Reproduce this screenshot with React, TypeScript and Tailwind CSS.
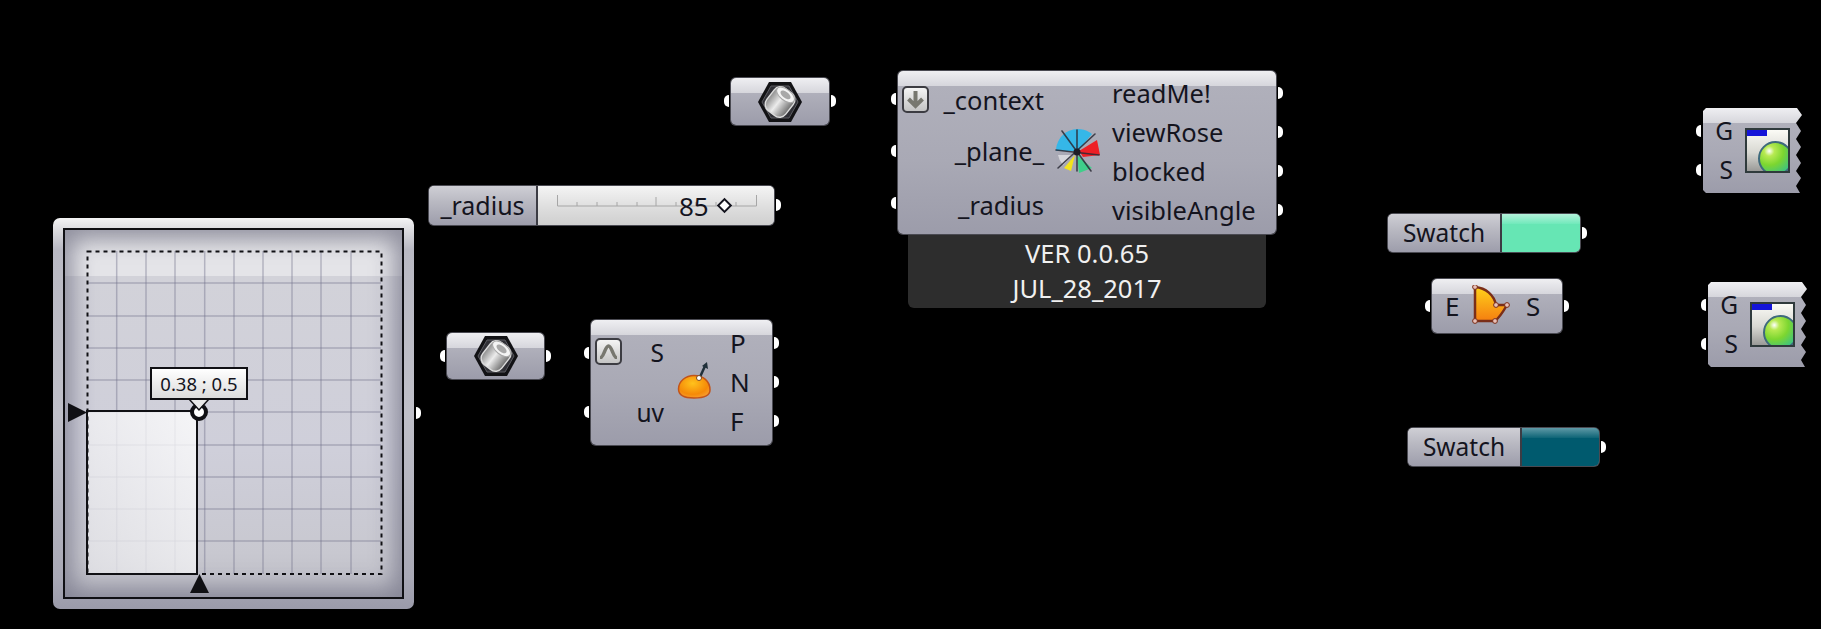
import type { ReactNode } from "react";

const NODE = "absolute rounded-[5px] ring-1 ring-[#4a4a52] text-[#14141e] bg-[linear-gradient(#efeff2_0,#d6d6dc_15px,#b0b0bb_15px,#a9a9b5_55%,#9c9caa_100%)]";
const GREY_CELL = "bg-[linear-gradient(#cfcfd5_0,#b9b9c2_40%,#9d9dab_100%)]";

// column of port nubs hanging off a node edge
function Pins({ side, count, className }: { side: "left" | "right"; count: number; className: string }) {
  const rail = side === "left" ? "-left-[7px]" : "-right-[7px]";
  const shape = side === "left" ? "rounded-l-full" : "rounded-r-full";
  return (
    <div className={`absolute flex flex-col ${rail} ${className}`}>
      {Array.from({ length: count }, (_, i) => (
        <span key={i} className={`h-[12px] w-[5px] bg-white ${shape}`} />
      ))}
    </div>
  );
}

function Label({ children, className = "" }: { children: ReactNode; className?: string }) {
  return <span className={`block h-[34px] leading-[34px] whitespace-nowrap ${className}`}>{children}</span>;
}

function HexIcon({ id }: { id: string }) {
  return (
    <svg width="46" height="42" viewBox="0 0 46 42">
      <defs>
        <linearGradient id={id} x1="0" y1="0" x2="1" y2="0">
          <stop offset="0" stopColor="#8c8c8c" />
          <stop offset="0.45" stopColor="#ececec" />
          <stop offset="1" stopColor="#6e6e6e" />
        </linearGradient>
      </defs>
      <polygon points="1,21 12,1 34,1 45,21 34,41 12,41" fill="#121215" />
      <polygon points="5,21 14,5 32,5 41,21 32,37 14,37" fill="#303036" stroke="#5c5c62" strokeWidth="1" />
      <g transform="rotate(38 23 21)">
        <rect x="11" y="7" width="24" height="28" rx="8" fill={`url(#${id})`} stroke="#dcdcdc" strokeWidth="1.5" />
        <ellipse cx="23" cy="12" rx="10.5" ry="5.5" fill="#f4f4f4" stroke="#a8a8a8" />
        <ellipse cx="23" cy="12" rx="6" ry="3" fill="#a8a8a8" />
      </g>
    </svg>
  );
}

function ParamHex({ className, id }: { className: string; id: string }) {
  return (
    <div className={`${NODE} flex items-center justify-center ${className}`}>
      <Pins side="left" count={1} className="top-[17px]" />
      <HexIcon id={id} />
      <Pins side="right" count={1} className="top-[17px]" />
    </div>
  );
}

function SquareButton({ children, className }: { children: ReactNode; className: string }) {
  return (
    <span className={`absolute left-[4px] flex h-[27px] w-[27px] items-center justify-center rounded-[5px] border-2 border-[#3c3c42] bg-[linear-gradient(#f4f4f4,#c4c4c4)] ${className}`}>
      {children}
    </span>
  );
}

function SurfaceIcon() {
  return (
    <svg width="36" height="38" viewBox="0 0 36 38">
      <defs>
        <radialGradient id="dome" cx="0.45" cy="0.35" r="0.75">
          <stop offset="0" stopColor="#ffc21c" />
          <stop offset="0.65" stopColor="#f58a08" />
          <stop offset="1" stopColor="#f9a53a" />
        </radialGradient>
      </defs>
      <path d="M1.5 28 C1.5 20 9 14.5 17 14.5 C26 14.5 33 20 33 29 C33 35 25 37 17 37 C9 37 1.5 35 1.5 28 Z" fill="url(#dome)" stroke="#c2541a" strokeWidth="1.5" />
      <path d="M23 16 L28 5" stroke="#20303a" strokeWidth="2.5" />
      <path d="M30 1 L25 5 L31 8 Z" fill="#20303a" />
      <circle cx="22" cy="17" r="2.5" fill="#fff" stroke="#7a4a20" />
    </svg>
  );
}

function RoseIcon() {
  return (
    <svg width="48" height="48" viewBox="0 0 48 48">
      <path d="M25 24 L3 24 A22 22 0 0 1 39 7 Z" fill="#35b7e8" />
      <path d="M26 24 L44 13 L47 28 L30 30 Z" fill="#ee1f25" />
      <path d="M24 28 L26 46 L39 41 Z" fill="#3fcf8a" />
      <path d="M22 28 L11 41 L18 44 Z" fill="#f3e31b" />
      <path d="M20 28 L5 28 A20 20 0 0 0 10 38 Z" fill="#d6d6dc" />
      <g stroke="#2a2a35" strokeOpacity="0.85" strokeWidth="1.6" strokeLinecap="round">
        <path d="M9 4 L38 44" />
        <path d="M42 7 L5 41" />
        <path d="M24 3 L24 44" />
        <path d="M3 23 L46 28" />
      </g>
      <circle cx="24" cy="25" r="3.5" fill="#1d1d26" />
    </svg>
  );
}

function ShapeIcon() {
  return (
    <svg width="40" height="42" viewBox="0 0 40 42">
      <defs>
        <linearGradient id="shape" x1="0" y1="0" x2="0" y2="1">
          <stop offset="0" stopColor="#ffd21a" />
          <stop offset="1" stopColor="#f57e10" />
        </linearGradient>
      </defs>
      <path d="M4 2 C15 3 23 10 25 20 L36 20 C32 27 29 32 24 36 L4 36 Z" fill="url(#shape)" stroke="#7a2e18" strokeWidth="2.5" />
      {[[4, 2], [25, 20], [36, 20], [24, 36], [4, 36]].map(([cx, cy]) => (
        <circle key={`${cx}-${cy}`} cx={cx} cy={cy} r="2.4" fill="#e8c0b8" stroke="#7a2e18" />
      ))}
    </svg>
  );
}

function Swatch({ className, colour, gloss }: { className: string; colour: string; gloss: string }) {
  return (
    <div className={`${NODE} flex ${className}`}>
      <div className={`flex w-[114px] items-center justify-center rounded-l-[5px] border-r-2 border-[#3c3c44] text-[24.5px] ${GREY_CELL}`}>Swatch</div>
      <div className={`flex-1 rounded-r-[5px] ${colour}`}>
        <div className={`h-[10px] rounded-tr-[5px] ${gloss}`} />
      </div>
      <Pins side="right" count={1} className="top-[13px]" />
    </div>
  );
}

function PreviewIcon() {
  return (
    <div className="relative h-[45px] w-[45px] overflow-hidden border-2 border-[#2f3a3c] bg-[linear-gradient(#fbfbf6,#d8d8d2_55%,#9a9a98)]">
      <div className="h-[6px] w-[20px] bg-[#1414d8]" />
      <div className="absolute -right-[5px] -bottom-[5px] h-[35px] w-[35px] rounded-full border-2 border-[#3e6a7c] bg-[radial-gradient(circle_at_30%_26%,#ffffff_0,#b7ea52_16%,#7cd630_45%,#34c08c_85%,#1fa89a_100%)]" />
    </div>
  );
}

function Preview({ className }: { className: string }) {
  return (
    <div className={`absolute h-[85px] w-[99px] text-[#14141e] ${className}`}>
      <Pins side="left" count={2} className="top-[17px] gap-[27px]" />
      <div className="flex h-full items-center bg-[linear-gradient(#efeff2_0,#d6d6dc_15px,#b0b0bb_15px,#a9a9b5_55%,#9c9caa_100%)] [clip-path:polygon(3px_0,94px_0,99px_7px,93px_15px,98px_23px,93px_31px,98px_39px,93px_47px,98px_55px,93px_63px,98px_70px,93px_78px,97px_85px,3px_85px,0_82px,0_3px)]">
        <div className="flex w-[30px] flex-col items-end gap-[5px] text-[24.5px] leading-[34px]">
          <span>G</span>
          <span>S</span>
        </div>
        <div className="ml-[12px]">
          <PreviewIcon />
        </div>
      </div>
    </div>
  );
}

function MdSlider() {
  const xs = [116.7, 146, 175, 204.7, 234, 263, 292, 321, 351];
  const ys = [284, 317, 349, 381, 413, 446, 478, 510, 542];
  return (
    <div className="absolute top-[218px] left-[53px] h-[391px] w-[361px] rounded-[7px] bg-[linear-gradient(#f4f4f5,#dcdce0_3%,#b9b9c3_8%,#c0c0c9_50%,#a9a9b6_92%,#9a9aa9)] p-[10px]">
      <Pins side="right" count={1} className="top-[189px]" />
      <div className="relative h-full w-full border-2 border-[#101014] bg-[linear-gradient(#d8d8dc_0,#e4e4e8_26px,#e4e4e8_46px,#d2d2d9_46px,#cfcfda_60%,#c8c8d0_88%,#bcbcc5_100%)] shadow-[inset_0_0_22px_8px_rgba(105,105,125,0.65)]">
        <svg className="absolute -top-[2px] -left-[2px]" width="340" height="370" viewBox="63 229 340 370">
          <defs>
            <linearGradient id="sel" x1="1" y1="0" x2="0" y2="1">
              <stop offset="0" stopColor="#ffffff" />
              <stop offset="1" stopColor="#e4e4e8" />
            </linearGradient>
          </defs>
          <g stroke="#70708a" strokeOpacity="0.42" strokeWidth="1.5">
            {xs.map((x) => <line key={x} x1={x} x2={x} y1="252" y2="575" />)}
            {ys.map((y) => <line key={y} x1="87" x2="381" y1={y} y2={y} />)}
          </g>
          <rect x="87" y="412" width="110" height="163" fill="url(#sel)" fillOpacity="0.78" />
          <rect x="87.5" y="252.5" width="294" height="322.5" fill="none" stroke="#101014" strokeWidth="2" strokeDasharray="4 4" />
          <rect x="87" y="412" width="110" height="163" fill="none" stroke="#101014" strokeWidth="2" />
          <polygon points="68,404 87,413.5 68,423" fill="#101014" />
          <polygon points="199.5,575 209,594 190,594" fill="#101014" />
          <circle cx="199" cy="413" r="7" fill="#fff" stroke="#101014" strokeWidth="4" />
          <polygon points="189,399 209,399 199,411" fill="#e8e8e8" />
          <path d="M189 400 L199 411 L209 400" fill="none" stroke="#101014" strokeWidth="1.5" />
        </svg>
        <div className="absolute top-[137px] left-[85px] flex h-[33px] w-[98px] items-center justify-center border-2 border-[#101014] bg-[linear-gradient(#ffffff,#dcdcdc)] text-[18.5px] text-[#14141e]">
          0.38 ; 0.5
        </div>
      </div>
    </div>
  );
}

export default function App() {
  return (
    <div className="relative h-[629px] w-[1821px] overflow-hidden bg-black font-['Noto_Sans',sans-serif]">
      <MdSlider />

      {/* _radius slider */}
      <div className={`${NODE} top-[186px] left-[429px] flex h-[39px] w-[345px]`}>
        <div className={`flex w-[109px] items-center justify-center rounded-l-[5px] border-r-2 border-[#3c3c44] text-[25px] ${GREY_CELL}`}>_radius</div>
        <div className="relative flex flex-1 items-center rounded-r-[5px] bg-[linear-gradient(#f4f4f4,#dedede_55%,#cfcfcf)]">
          <svg className="absolute top-[9px] left-[19px]" width="200" height="12" viewBox="0 0 200 12">
            <path d="M0.5 0 V11 H199.5 V0 M20 7 V11 M40 7 V11 M60 7 V11 M80 7 V11 M99 2 V11 M119 7 V11 M139 7 V11 M159 7 V11 M179 7 V11" fill="none" stroke="#a6a6a6" />
          </svg>
          <span className="relative ml-[141px] text-[26px] leading-none">85</span>
          <span className="relative ml-[10px] h-[11px] w-[11px] rotate-45 border-[2.5px] border-[#14141e] bg-white" />
        </div>
        <Pins side="right" count={1} className="top-[13px]" />
      </div>

      <ParamHex id="hexA" className="top-[78px] left-[731px] h-[47px] w-[98px]" />
      <ParamHex id="hexB" className="top-[333px] left-[447px] h-[46px] w-[97px]" />

      {/* surface evaluation */}
      <div className={`${NODE} top-[320px] left-[591px] flex h-[125px] w-[181px] text-[24.5px]`}>
        <Pins side="left" count={2} className="top-[27px] gap-[47px]" />
        <SquareButton className="top-[18px]">
          <svg width="19" height="15" viewBox="0 0 19 15">
            <path d="M1 14 C5 14 6 2 9.5 2 C13 2 14 14 18 14" fill="none" stroke="#77776f" strokeWidth="3.5" />
          </svg>
        </SquareButton>
        <div className="flex w-[73px] flex-col items-end gap-[26px] pt-[16px]">
          <Label>S</Label>
          <Label>uv</Label>
        </div>
        <div className="mt-[41px] ml-[13px]">
          <SurfaceIcon />
        </div>
        <div className="ml-[17px] flex flex-col gap-[5px] pt-[6px] text-[26px]">
          <Label>P</Label>
          <Label>N</Label>
          <Label>F</Label>
        </div>
        <Pins side="right" count={3} className="top-[17px] gap-[27px]" />
      </div>

      {/* view rose caption sits behind the node */}
      <div className="absolute top-[224px] left-[908px] flex h-[84px] w-[358px] flex-col items-center rounded-b-[6px] bg-[#2d2d2d] pt-[12px] text-[25.5px] leading-[35px] text-[#f0f0f0]">
        <span>VER 0.0.65</span>
        <span>JUL_28_2017</span>
      </div>
      <div className={`${NODE} top-[71px] left-[898px] flex h-[163px] w-[378px] text-[25.5px]`}>
        <Pins side="left" count={3} className="top-[22px] gap-[40px]" />
        <SquareButton className="top-[15px]">
          <svg width="19" height="19" viewBox="0 0 19 19">
            <path d="M9.5 1 V16 M2.5 9 L9.5 16 L16.5 9" fill="none" stroke="#77776f" strokeWidth="4" />
          </svg>
        </SquareButton>
        <div className="flex w-[146px] flex-col items-end pt-[12px]">
          <Label>_context</Label>
          <Label className="mt-[17px]">_plane_</Label>
          <Label className="mt-[20px]">_radius</Label>
        </div>
        <div className="mt-[56px] ml-[9px]">
          <RoseIcon />
        </div>
        <div className="ml-[11px] flex flex-col gap-[5px] pt-[5px]">
          <Label>readMe!</Label>
          <Label>viewRose</Label>
          <Label>blocked</Label>
          <Label>visibleAngle</Label>
        </div>
        <Pins side="right" count={4} className="top-[16px] gap-[27px]" />
      </div>

      <Swatch className="top-[214px] left-[1388px] h-[38px] w-[192px]" colour="bg-[#66e6b4]" gloss="bg-[linear-gradient(#b4f2da,#70e9bb)]" />
      <Swatch className="top-[428px] left-[1408px] h-[38px] w-[191px]" colour="bg-[#005a6e]" gloss="bg-[linear-gradient(#5f99a6,#0d6476)]" />

      {/* edge to surface */}
      <div className={`${NODE} top-[279px] left-[1432px] flex h-[54px] w-[130px] items-center text-[26px]`}>
        <Pins side="left" count={1} className="top-[21px]" />
        <span className="ml-[13px] w-[26px]">E</span>
        <ShapeIcon />
        <span className="ml-[15px]">S</span>
        <Pins side="right" count={1} className="top-[21px]" />
      </div>

      <Preview className="top-[108px] left-[1703px]" />
      <Preview className="top-[282px] left-[1708px]" />
    </div>
  );
}
